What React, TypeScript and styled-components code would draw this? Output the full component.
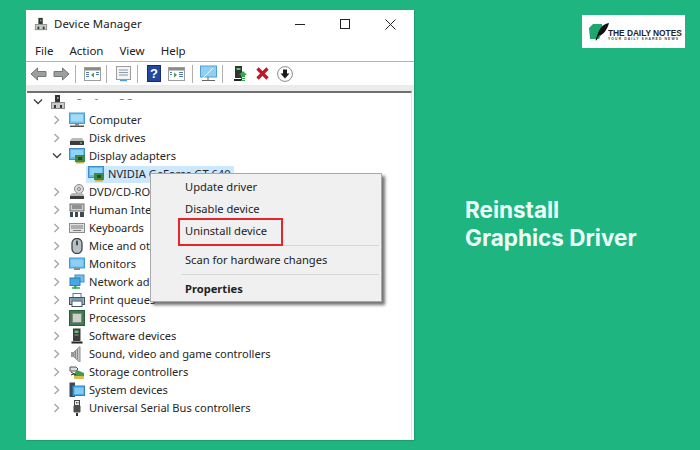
import React from "react";
import styled, { createGlobalStyle } from "styled-components";

const Global = createGlobalStyle`
  html, body { margin: 0; padding: 0; width: 700px; height: 450px; overflow: hidden; background: #1fb581; }
  * { box-sizing: border-box; }
`;

const Page = styled.div`
  width: 700px; height: 450px; background: #1fb581; display: flex; padding: 10px 15px 10px 26px;
  font-family: "Noto Sans", sans-serif;
`;
const Win = styled.div`
  position: relative; width: 388px; height: 430px; background: #fff; display: flex; flex-direction: column; flex: none;
  box-shadow: 1px 1px 1px rgba(0,0,0,.12);
`;
const TitleBar = styled.div`
  height: 28px; display: flex; align-items: center; padding: 0 18px 0 8px; color: #1a1a1a; font-size: 11.4px; gap: 6px; flex: none;
`;
const TitleText = styled.span` flex: 1; letter-spacing: .1px; padding-bottom: 2px; `;
const WinButtons = styled.div` display: flex; align-items: center; gap: 35px; `;
const MenuBar = styled.div`
  height: 23px; display: flex; align-items: center; gap: 16px; padding: 2px 0 0 9px; font-size: 11.5px; color: #222; flex: none;
`;
const Toolbar = styled.div`
  height: 24px; border-top: 1px solid #b4b4b4; display: flex; align-items: center; padding: 0 0 0 4px; flex: none;
`;
const ToolSep = styled.div<{ $l: number; $r: number }>`
  width: 1px; height: 18px; background: #aeb0b2; margin: 0 ${p => p.$r}px 0 ${p => p.$l}px; flex: none;
`;
const Strip = styled.div` height: 6px; background: #ebebeb; flex: none; `;
const Tree = styled.div`
  flex: 1; border-top: 2px solid #707070; margin: 0 2px 0 1px; border-right: 1px solid #e4e4e4; background: #fff;
`;
const Row = styled.div<{ $level: number }>`
  height: 18px; display: flex; align-items: center; padding-left: ${p => 4 + p.$level * 19}px; font-size: 11.1px; color: #262626; white-space: nowrap;
`;
const Chev = styled.div` width: 14px; height: 18px; display: flex; align-items: center; justify-content: center; flex: none; `;
const Item = styled.div<{ $sel?: boolean }>`
  display: flex; align-items: center; gap: 4px; padding: 0 ${p => (p.$sel ? 4 : 2)}px 0 2px; height: 17px; margin-left: 3px;
  background: ${p => (p.$sel ? "#cce8ff" : "transparent")};
`;
const Label = styled.span` padding-bottom: 2px; `;
const Hidden = styled.span`
  display: block; height: 6px; overflow: hidden; align-self: flex-start; line-height: 17px; color: #777; width: 58px; margin-left: 6px;
`;
const Menu = styled.div`
  position: absolute; left: 124px; top: 163px; width: 232px; height: 129px; background: #f0f0f0; border: 1px solid #a9a9a9;
  box-shadow: 3px 3px 3px rgba(0,0,0,.55); padding: 2px 0 0 34px; font-size: 11.15px; color: #222; z-index: 2;
`;
const MenuItem = styled.div<{ $bold?: boolean }>`
  height: 22px; display: flex; align-items: center; padding-bottom: 2px; font-weight: ${p => (p.$bold ? 700 : 400)}; white-space: nowrap;
`;
const MenuSep = styled.div` height: 1px; background: #d7d7d7; margin: 3px 2px 3px -4px; `;
const Highlight = styled.div`
  position: absolute; left: 27px; top: 44px; width: 105px; height: 28px; border: 2px solid #e2262b; pointer-events: none;
`;
const Side = styled.div` flex: 1; display: flex; flex-direction: column; padding-left: 51px; position: relative; `;
const Logo = styled.div`
  align-self: flex-end; width: 103px; height: 33px; background: #fff; margin-top: 5px; display: flex; align-items: center; padding: 0 0 0 6px;
`;
const LogoText = styled.div` display: flex; flex-direction: column; margin-left: -2px; margin-top: 7px; font-family: "Liberation Sans", sans-serif; color: #1c2430; `;
const LogoMain = styled.div` font-size: 8.4px; font-weight: 700; line-height: 8px; white-space: nowrap; letter-spacing: -.05px; `;
const LogoSub = styled.div` font-size: 3.4px; font-weight: 700; letter-spacing: 1.1px; line-height: 5px; white-space: nowrap; color: #444; `;
const Heading = styled.h1`
  margin: 148px 0 0; font-family: Inter, sans-serif; font-weight: 700; font-size: 22.5px; line-height: 28px; color: #effdf8; white-space: nowrap;
`;

const S = styled.svg` display: block; flex: none; `;
const Ic = ({ children, w = 16, h = 16, vb }: { children: React.ReactNode; w?: number; h?: number; vb?: string }) => (
  <S width={w} height={h} viewBox={vb ?? `0 0 ${w} ${h}`}>{children}</S>
);

const ChevR = () => <Ic w={8} h={10}><path d="M1.5 1l4 4-4 4" fill="none" stroke="#a6a6a6" strokeWidth="1.4" /></Ic>;
const ChevD = () => <Ic w={10} h={8}><path d="M1 1.500l4 4 4-4" fill="none" stroke="#404040" strokeWidth="1.4" /></Ic>;

const Screen = () => (
  <g>
    <rect x=".5" y=".5" width="15" height="11" fill="#5fb8ea" stroke="#3f8fc4" />
    <path d="M2 2h12v7H2z" fill="#8fd3f6" />
  </g>
);
const Card = () => <g><rect x="6" y="7" width="10" height="7" fill="#3d8a45" /><path d="M7 14h8v1.500H7z" fill="#c9b14a" /><rect x="9" y="9" width="4" height="3" fill="#1f4f27" /></g>;

const rootShape = <><rect x="5" y="1" width="5" height="8" fill="#333" /><rect x="7" y="3" width="1.500" height="2" fill="#6c6" /><rect x="1" y="8" width="14" height="7" fill="#8c8c8c" /><rect x="2" y="9" width="12" height="5" fill="#c9c9c9" /><rect x="4" y="11" width="2" height="3" fill="#333" /><rect x="10" y="11" width="2" height="3" fill="#333" /></>;

const icons: Record<string, React.ReactNode> = {
  root: <Ic>{rootShape}</Ic>,
  computer: <Ic><rect x=".5" y="1" width="15" height="10.5" fill="#6fc0ef" stroke="#4a9bd0" /><path d="M2 2.500h12v7H2z" fill="#a4dcf8" /><rect x="6" y="11.500" width="4" height="2" fill="#8a8a8a" /><rect x="1" y="13.500" width="14" height="1.500" fill="#555" /></Ic>,
  disk: <Ic><path d="M3 8h10l2 3v4H1v-4z" fill="#b9b9b9" /><rect x="1" y="11" width="14" height="4" fill="#3c3c3c" /><rect x="11" y="12.500" width="2" height="1" fill="#6f6" /></Ic>,
  display: <Ic><Screen /><Card /></Ic>,
  dvd: <Ic><circle cx="10" cy="5" r="4.500" fill="#d8d8d8" stroke="#8a8a8a" /><circle cx="10" cy="5" r="1.400" fill="#fff" stroke="#777" /><path d="M3 9h10l2 2v4H1v-4z" fill="#b5b5b5" /><rect x="1" y="12" width="14" height="3" fill="#3c3c3c" /></Ic>,
  hid: <Ic><rect x="1" y="2" width="14" height="7" fill="#cfcfcf" stroke="#6b6b6b" /><path d="M3 4h10M3 6h10" stroke="#555" /><path d="M1 15v-5h3v5zM6 15v-5h3v5zM11 15v-5h4v5z" fill="#3d4a55" /></Ic>,
  keyboard: <Ic><rect x=".5" y="3.500" width="15" height="9" fill="#e2e2e2" stroke="#8d8d8d" /><path d="M2 6h12M2 8h12M4 10.500h8" stroke="#7b7b7b" strokeWidth="1.100" /></Ic>,
  mouse: <Ic><rect x="3" y=".5" width="10" height="15" rx="4.800" fill="#b9c0c6" stroke="#3a4650" strokeWidth="1.300" /><rect x="7" y="2.500" width="2" height="5" rx="1" fill="#3a4650" /></Ic>,
  monitor: <Ic><rect x=".5" y="2" width="15" height="10" fill="#65b9ee" stroke="#4a9bd0" /><path d="M2 3.500h12v7H2z" fill="#8dd0f6" /><rect x="5" y="12" width="6" height="2" fill="#8a8a8a" /></Ic>,
  network: <Ic><rect x="6" y="1" width="9" height="7" fill="#6fc0ef" stroke="#3f8fc4" /><rect x="1" y="4" width="10" height="7.500" fill="#46a7e4" stroke="#2f7fb5" /><path d="M6 11.500v2M3 14h8" stroke="#33a853" strokeWidth="1.600" /><path d="M4.500 12.500l2 2.500 2-2.500z" fill="#33a853" /></Ic>,
  printer: <Ic><rect x="4" y="1.500" width="8" height="4" fill="#fff" stroke="#5a7b96" /><rect x=".5" y="5.500" width="15" height="7" fill="#a9b4bc" stroke="#48525a" /><rect x="3" y="9" width="10" height="5.500" fill="#fff" stroke="#48525a" /><rect x="2" y="6.500" width="12" height="1" fill="#3b82c0" /></Ic>,
  processor: <Ic><rect x=".5" y=".5" width="15" height="15" fill="#3e7d4e" stroke="#2c5c38" /><rect x="3.500" y="3.500" width="9" height="9" fill="#cfcfc9" stroke="#848484" /></Ic>,
  software: <Ic><rect x="4" y=".5" width="7.500" height="12.500" fill="#3c3c3c" /><rect x="5.500" y="2.500" width="4" height="2.500" fill="#5fc36d" /><rect x="5.500" y="6.500" width="4" height="1" fill="#9a9a9a" /><rect x="2.500" y="13.500" width="11" height="2" fill="#222" /></Ic>,
  sound: <Ic><path d="M2 6h3v5H2z" fill="#9a9a9a" /><path d="M5 6l6-5.500v16L5 11z" fill="#c5c5c5" stroke="#8f8f8f" /><path d="M6.500 5v7M8.500 3.500v10" stroke="#8a8a8a" /></Ic>,
  storage: <Ic><path d="M1 3h6l2 2-2 2H1z" fill="#ddd" stroke="#555" /><path d="M5 10l3-4 7 3v3H5z" fill="#3f9a52" /><path d="M5 12h10v3H5z" fill="#d8c14a" /><path d="M2 8l5 3M2 11l3-1" stroke="#333" /></Ic>,
  system: <Ic><rect x=".5" y=".5" width="5.500" height="14.500" fill="#3b4a58" /><rect x="4" y="4" width="11.500" height="9.500" fill="#4aa9ea" stroke="#2f85c0" /><rect x="5.500" y="5.500" width="9" height="6.500" fill="#7fcdf6" /></Ic>,
  usb: <Ic><rect x="5.500" y=".5" width="5" height="5" fill="#e8e8e8" stroke="#454545" /><rect x="4.500" y="5.500" width="7" height="7" rx="1" fill="#4d4d4d" /><path d="M7 13h2v3H7z" fill="#333" /><path d="M7 2h.8v1.500H7zM8.600 2h.8v1.500h-.8z" fill="#333" /></Ic>,
};

const Arrow = ({ right }: { right?: boolean }) => (
  <Ic w={17} h={14}><path transform={right ? "translate(17 0) scale(-1 1)" : undefined} d="M1 7l6.500-6v3.500H16v5H7.500V13z" fill="#9aa09d" stroke="#737874" strokeWidth="1" /></Ic>
);
const Pane = ({ mark }: { mark: "l" | "r" }) => (
  <Ic w={17} h={15}>
    <rect x=".5" y="1.500" width="16" height="13" fill="#fff" stroke="#9d9d9d" />
    <rect x="1" y="2" width="15" height="2.500" fill="#8b8b8b" />
    <path d={mark === "l" ? "M10 6.500v5l-3-2.500z" : "M6 6.500v5l3-2.500z"} fill="#3f9f55" />
    <path d={mark === "l" ? "M2 6.500h3M2 8.500h3M2 10.500h3M12 6.500h3M12 8.500h3" : "M11 6.500h4M11 8.500h4M11 10.500h4M2 6.500h2M2 8.500h2"} stroke="#4e7fa8" />
  </Ic>
);

const ToolIcon = styled.div<{ $l?: number }>` margin-left: ${p => p.$l ?? 0}px; display: flex; flex: none; `;

type R = { level: number; label: string; icon: string; open?: boolean; sel?: boolean; noChev?: boolean };
const rows: R[] = [
  { level: 1, label: "Computer", icon: "computer" },
  { level: 1, label: "Disk drives", icon: "disk" },
  { level: 1, label: "Display adapters", icon: "display", open: true },
  { level: 2, label: "NVIDIA GeForce GT 640", icon: "display", sel: true, noChev: true },
  { level: 1, label: "DVD/CD-ROM drives", icon: "dvd" },
  { level: 1, label: "Human Interface Devices", icon: "hid" },
  { level: 1, label: "Keyboards", icon: "keyboard" },
  { level: 1, label: "Mice and other pointing devices", icon: "mouse" },
  { level: 1, label: "Monitors", icon: "monitor" },
  { level: 1, label: "Network adapters", icon: "network" },
  { level: 1, label: "Print queues", icon: "printer" },
  { level: 1, label: "Processors", icon: "processor" },
  { level: 1, label: "Software devices", icon: "software" },
  { level: 1, label: "Sound, video and game controllers", icon: "sound" },
  { level: 1, label: "Storage controllers", icon: "storage" },
  { level: 1, label: "System devices", icon: "system" },
  { level: 1, label: "Universal Serial Bus controllers", icon: "usb" },
];

export default function App() {
  return (
    <Page>
      <Global />
      <Win>
        <TitleBar>
          <Ic w={14} h={16} vb="0 0 16 16">{rootShape}</Ic>
          <TitleText>Device Manager</TitleText>
          <WinButtons>
            <Ic w={10} h={10}><path d="M0 5.500h10" stroke="#222" /></Ic>
            <Ic w={10} h={10}><rect x=".5" y=".5" width="9" height="9" fill="none" stroke="#222" /></Ic>
            <Ic w={11} h={11}><path d="M.5.5l10 10M10.500.5l-10 10" stroke="#222" /></Ic>
          </WinButtons>
        </TitleBar>
        <MenuBar>
          <span>File</span><span>Action</span><span>View</span><span>Help</span>
        </MenuBar>
        <Toolbar>
          <Arrow />
          <ToolIcon $l={6}><Arrow right /></ToolIcon>
          <ToolSep $l={5} $r={8} />
          <Pane mark="l" />
          <ToolSep $l={5} $r={8} />
          <Ic w={17} h={17}><rect x="1.500" y="1.500" width="14" height="13" fill="#f4f4f4" stroke="#9d9d9d" /><path d="M4 5h9M4 7.500h9M4 10h9" stroke="#8a9aa8" /><path d="M5 15.500h7" stroke="#4aa3e0" strokeWidth="1.500" /></Ic>
          <ToolSep $l={5} $r={9} />
          <Ic w={14} h={17}><rect x=".5" y=".5" width="13" height="16" fill="#23479c" stroke="#142c6c" /><text x="7" y="13" textAnchor="middle" fontSize="13" fontWeight="700" fill="#fff" fontFamily="Liberation Sans">?</text></Ic>
          <ToolIcon $l={7}><Pane mark="r" /></ToolIcon>
          <ToolSep $l={7} $r={6} />
          <Ic w={19} h={17}><rect x="1.500" y="1" width="16" height="11" fill="#8fd0f4" stroke="#4e9fd3" /><path d="M9 12v3M3 15.500h13" stroke="#666" /><path d="M1 16L14 3" stroke="#e9f7ff" /></Ic>
          <ToolSep $l={4} $r={11} />
          <Ic w={14} h={17}><rect x="1" y="1" width="7" height="12" fill="#333" /><rect x="2.500" y="3" width="4" height="2" fill="#5c6" /><rect x="0" y="14" width="8" height="2" fill="#222" /><path d="M5 10l4-4 4 4h-2v2H7v-2z" fill="#31a84f" /><path d="M7 13h4v1H7zM7 15h4v1H7z" fill="#31a84f" /></Ic>
          <ToolIcon $l={8}><Ic w={13} h={13}><path d="M1.500 1.500l10 10M11.500 1.500l-10 10" stroke="#c4162a" strokeWidth="3.200" /></Ic></ToolIcon>
          <ToolIcon $l={8}><Ic w={16} h={16}><circle cx="8" cy="8" r="7.400" fill="#fff" stroke="#8a8a8a" /><path d="M6 3.500h4v4h2.500L8 12.500 3.500 7.500H6z" fill="#1c1c1c" /></Ic></ToolIcon>
        </Toolbar>
        <Strip />
        <Tree>
          <Row $level={0}>
            <Chev><ChevD /></Chev>
            <Item>
              {icons.root}
              <Hidden>Surface-PC</Hidden>
            </Item>
          </Row>
          {rows.map(r => (
            <Row key={r.label} $level={r.level}>
              <Chev>{r.noChev ? null : r.open ? <ChevD /> : <ChevR />}</Chev>
              <Item $sel={r.sel}>
                {icons[r.icon]}
                <Label>{r.label}</Label>
              </Item>
            </Row>
          ))}
        </Tree>
        <Menu>
          <MenuItem>Update driver</MenuItem>
          <MenuItem>Disable device</MenuItem>
          <MenuItem>Uninstall device</MenuItem>
          <MenuSep />
          <MenuItem>Scan for hardware changes</MenuItem>
          <MenuSep />
          <MenuItem $bold>Properties</MenuItem>
          <Highlight />
        </Menu>
      </Win>
      <Side>
        <Logo>
          <Ic w={22} h={20} vb="0 0 22 20">
            <path d="M1 6l4-4h9l1 7-4 8H2z" fill="#1fa672" />
            <path d="M21 1c-4 .5-7 3-9 6l-2 4-2.500 7 1 .5 2.500-5c4-.5 8-5 10-12.500z" fill="#111" />
          </Ic>
          <LogoText>
            <LogoMain>THE DAILY NOTES</LogoMain>
            <LogoSub>YOUR DAILY SHARED NEWS</LogoSub>
          </LogoText>
        </Logo>
        <Heading>Reinstall<br />Graphics Driver</Heading>
      </Side>
    </Page>
  );
}
